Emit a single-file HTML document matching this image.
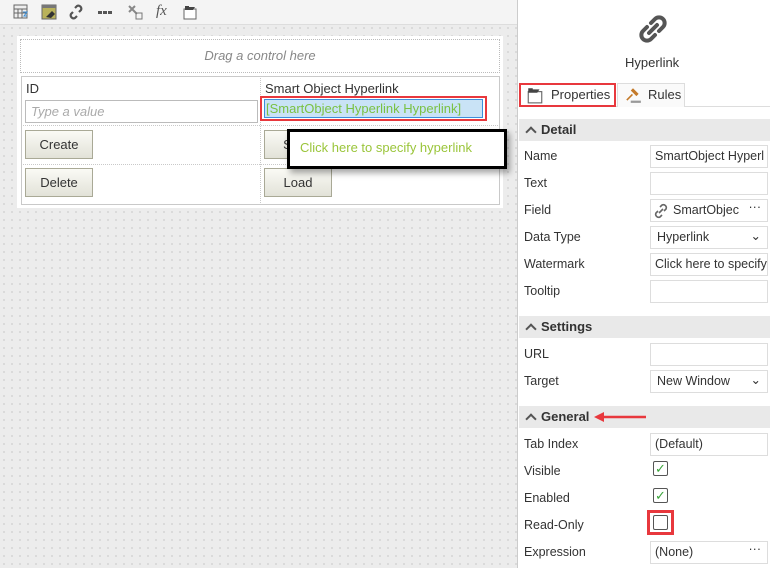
<!DOCTYPE html>
<html><head><style>
*{margin:0;padding:0;box-sizing:border-box}
body{width:770px;height:568px;overflow:hidden;font-family:"Liberation Sans","DejaVu Sans",sans-serif;font-size:12.5px;color:#333;background:#fff;position:relative}
.a{position:absolute}
#left{left:0;top:0;width:517px;height:568px;background:#ececec;background-image:radial-gradient(#d4d4d4 0.8px,transparent 0.9px);background-size:8px 8px}
#tb{left:0;top:0;width:517px;height:25px;background:#f4f4f4;border-bottom:1px solid #ddd}
.ic{top:4px;width:16px;height:16px}
#form{left:17px;top:36px;width:486px;height:172px;background:#fff}
.btn{position:absolute;width:68px;height:29px;border:1px solid #a9a996;background:linear-gradient(#fafaf5,#e2e2d8);text-align:center;line-height:27px;font-size:13px}
.lbl{position:absolute;left:524px;font-size:12.5px;color:#333}
.inp{position:absolute;left:650px;width:118px;height:23px;border:1px solid #ddd;background:#fff;font-size:12.5px;line-height:21px;padding-left:4px;white-space:nowrap;overflow:hidden}
.hd{position:absolute;left:519px;width:251px;height:22px;background:#e9e9e9;font-weight:bold;font-size:13px;line-height:22px;padding-left:22px;color:#333}
.hd:before{content:"";position:absolute;left:8px;top:9px;width:6px;height:6px;border-left:2px solid #555;border-top:2px solid #555;transform:rotate(45deg)}
.cb{position:absolute;left:653px;width:15px;height:15px;border:1px solid #555;border-radius:2px;background:#fff;color:#3aa43a;font-size:13px;line-height:13px;text-align:center;font-weight:bold}
</style></head><body>
<div id="left" class="a"></div>
<div id="tb" class="a">
<svg class="a ic" style="left:13px" viewBox="0 0 16 16"><rect x="1" y="1" width="13" height="13" fill="#eee" stroke="#666"/><path d="M1 5h13M1 9h13M5 5v9M9 5v9" stroke="#666"/><path d="M10 8l4 0-3 4 3 0" stroke="#3a8fd8" fill="none"/></svg>
<svg class="a ic" style="left:41px" viewBox="0 0 16 16"><rect x="1" y="1" width="14" height="14" fill="#b9b25a" stroke="#666"/><rect x="1" y="1" width="14" height="3" fill="#777"/><path d="M5 13l6-6 3 3-4 4z" fill="#333"/></svg>
<svg class="a ic" style="left:68px" viewBox="0 0 16 16"><path d="M7 4l2-2a3 3 0 0 1 4 4l-2 2M9 12l-2 2a3 3 0 0 1-4-4l2-2" stroke="#555" stroke-width="2.2" fill="none"/></svg>
<svg class="a ic" style="left:97px" viewBox="0 0 16 16"><rect x="1" y="7" width="4" height="3" fill="#555"/><rect x="6" y="7" width="4" height="3" fill="#555"/><rect x="11" y="7" width="4" height="3" fill="#555"/></svg>
<svg class="a ic" style="left:127px" viewBox="0 0 16 16"><path d="M2 2l8 8M2 8l6-6" stroke="#888" stroke-width="2"/><rect x="9" y="9" width="6" height="6" fill="none" stroke="#777"/></svg>
<div class="a" style="left:156px;top:3px;font-style:italic;font-family:'Liberation Serif',serif;font-size:15px;color:#555">fx</div>
<svg class="a ic" style="left:182px" viewBox="0 0 16 16"><rect x="2" y="5" width="12" height="10" fill="#fff" stroke="#666"/><path d="M3 2h4v4h-4zM7 3h6l-2 3h-4" fill="#444"/></svg>
</div>
<div id="form" class="a">
<div class="a" style="left:3px;top:3px;width:480px;height:34px;border:1px dotted #bbb;text-align:center;line-height:32px;font-style:italic;color:#888;font-size:13px">Drag a control here</div>
<div class="a" style="left:4px;top:40px;width:479px;height:129px;border:1px solid #c9c9c9"></div>
<div class="a" style="left:243px;top:40px;width:0;height:129px;border-left:1px dotted #c9c9c9"></div>
<div class="a" style="left:4px;top:89px;width:479px;border-top:1px dotted #c9c9c9"></div>
<div class="a" style="left:4px;top:128px;width:479px;border-top:1px dotted #c9c9c9"></div>
<div class="a" style="left:9px;top:45px;font-size:13px">ID</div>
<div class="a" style="left:8px;top:64px;width:233px;height:23px;border:1px solid #bbb;font-style:italic;color:#aaa;padding-left:5px;line-height:21px;font-size:13px">Type a value</div>
<div class="a" style="left:248px;top:45px;font-size:13px">Smart Object Hyperlink</div>
<div class="a" style="left:243px;top:60px;width:227px;height:25px;border:2px solid #e8383d"></div>
<div class="a" style="left:247px;top:63px;width:219px;height:19px;border:1px solid #3c8fdc;background:#c9e3f6;color:#7ac143;font-size:13px;line-height:17px;padding-left:1px;white-space:nowrap">[SmartObject Hyperlink Hyperlink]</div>
<div class="btn" style="left:8px;top:94px">Create</div>
<div class="btn" style="left:247px;top:94px">Save</div>
<div class="btn" style="left:8px;top:132px">Delete</div>
<div class="btn" style="left:247px;top:132px">Load</div>
</div>
<div class="a" style="left:287px;top:129px;width:220px;height:40px;border:3px solid #000;background:#fff;box-shadow:3px 4px 6px rgba(0,0,0,.35);color:#9ac53a;font-size:13px;line-height:32px;padding-left:10px">Click here to specify hyperlink</div>
<div class="a" style="left:517px;top:0;width:1px;height:568px;background:#ccc"></div>
<svg class="a" style="left:637px;top:13px" width="32" height="32" viewBox="0 0 32 32"><path d="M14 10l4-4a5.5 5.5 0 0 1 8 8l-4 4M18 22l-4 4a5.5 5.5 0 0 1-8-8l4-4M12 20l8-8" stroke="#555" stroke-width="4" fill="none" stroke-linecap="round"/></svg>
<div class="a" style="left:625px;top:55px;font-size:13px;color:#333">Hyperlink</div>
<div class="a" style="left:519px;top:106px;width:251px;border-top:1px solid #ddd"></div>
<div class="a" style="left:519px;top:83px;width:97px;height:24px;border:2px solid #e8383d;background:#fff;padding-left:30px;line-height:20px;font-size:13px">Properties</div>
<svg class="a" style="left:526px;top:86px" width="18" height="18" viewBox="0 0 16 16"><rect x="2" y="5" width="12" height="10" fill="#fff" stroke="#666"/><path d="M2 2h4v4h-4zM6 3h6l-2 3h-4" fill="#444"/></svg>
<div class="a" style="left:617px;top:83px;width:68px;height:24px;border:1px solid #ddd;border-bottom:none;background:#fafafa;padding-left:30px;line-height:22px;font-size:13px">Rules</div>
<svg class="a" style="left:624px;top:86px" width="18" height="18" viewBox="0 0 16 16"><path d="M8 2l5 5-2 2-5-5zM7 7l-5 5 1 1 5-5" fill="#c47a2a"/><rect x="6" y="13" width="9" height="2" fill="#999"/></svg>
<div class="hd" style="top:119px">Detail</div>
<div class="lbl" style="top:149px">Name</div><div class="inp" style="top:145px">SmartObject Hyperl</div>
<div class="lbl" style="top:176px">Text</div><div class="inp" style="top:172px"></div>
<div class="lbl" style="top:203px">Field</div><div class="inp" style="top:199px;padding-left:22px">SmartObjec<span style="position:absolute;right:6px;top:-3px">···</span></div>
<svg class="a" style="left:653px;top:203px" width="16" height="16" viewBox="0 0 16 16"><path d="M7 4l2-2a3 3 0 0 1 4 4l-2 2M9 12l-2 2a3 3 0 0 1-4-4l2-2M6 10l4-4" stroke="#666" stroke-width="1.6" fill="none"/></svg>
<div class="lbl" style="top:230px">Data Type</div><div class="inp" style="top:226px;padding-left:6px">Hyperlink<span style="position:absolute;right:6px;top:-1px">&#8964;</span></div>
<div class="lbl" style="top:257px">Watermark</div><div class="inp" style="top:253px">Click here to specify</div>
<div class="lbl" style="top:284px">Tooltip</div><div class="inp" style="top:280px"></div>
<div class="hd" style="top:316px">Settings</div>
<div class="lbl" style="top:347px">URL</div><div class="inp" style="top:343px"></div>
<div class="lbl" style="top:374px">Target</div><div class="inp" style="top:370px;padding-left:6px">New Window<span style="position:absolute;right:6px;top:-1px">&#8964;</span></div>
<div class="hd" style="top:406px">General</div>
<svg class="a" style="left:593px;top:411px" width="54" height="12" viewBox="0 0 54 12"><path d="M10 6h43" stroke="#e8383d" stroke-width="2.5"/><path d="M1 6l10-5v10z" fill="#e8383d"/></svg>
<div class="lbl" style="top:437px">Tab Index</div><div class="inp" style="top:433px">(Default)</div>
<div class="lbl" style="top:464px">Visible</div><div class="cb" style="top:461px">✓</div>
<div class="lbl" style="top:491px">Enabled</div><div class="cb" style="top:488px">✓</div>
<div class="lbl" style="top:518px">Read-Only</div>
<div class="a" style="left:647px;top:510px;width:27px;height:25px;border:3px solid #e8383d"></div>
<div class="cb" style="top:515px"></div>
<div class="lbl" style="top:545px">Expression</div><div class="inp" style="top:541px">(None)<span style="position:absolute;right:6px;top:-3px">···</span></div>
</body></html>
